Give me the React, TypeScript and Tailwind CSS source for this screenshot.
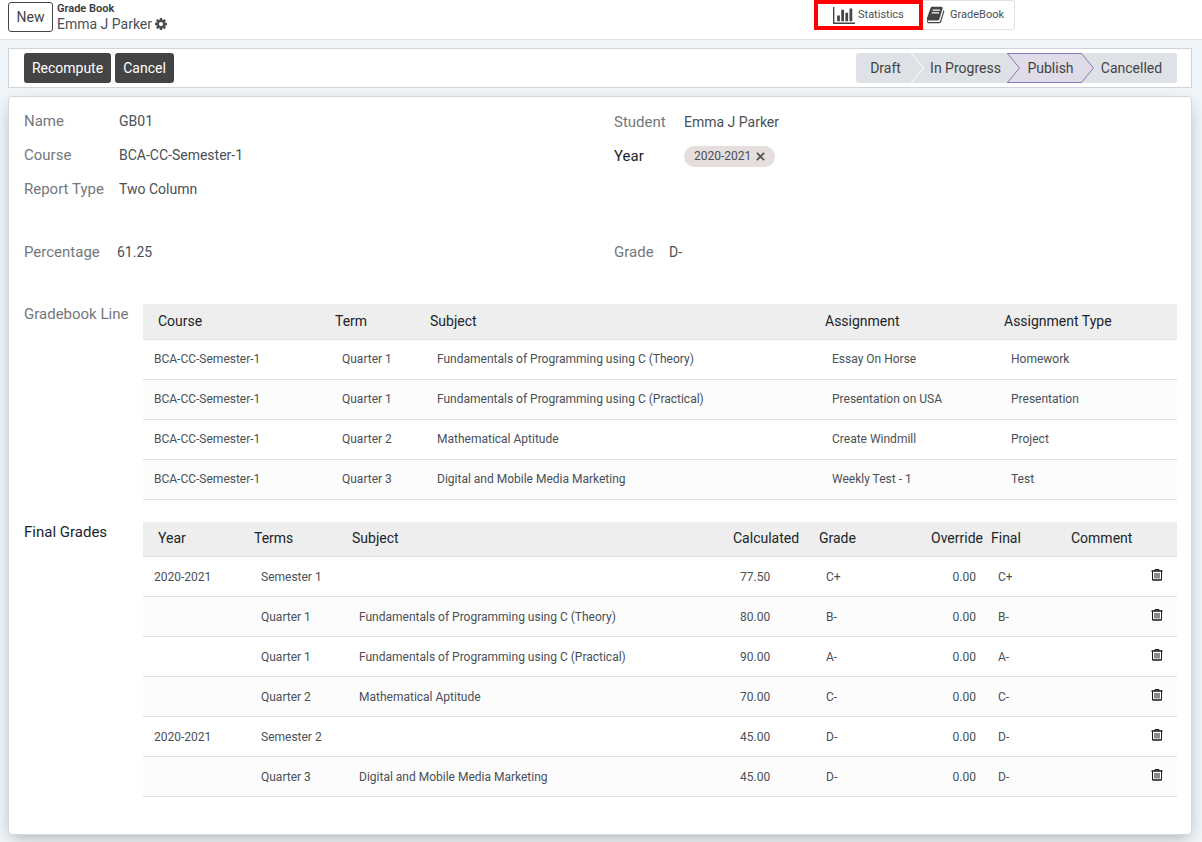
const cog = 'M1152 896q0-106-75-181t-181-75-181 75-75 181 75 181 181 75 181-75 75-181zm512-109v222q0 12-8 23t-20 13l-185 28q-19 54-39 91 35 50 107 138 10 12 10 25t-9 23q-27 37-99 108t-94 71q-12 0-26-9l-138-108q-44 23-91 38-16 136-29 186-7 28-36 28h-222q-14 0-24.500-8.500t-11.500-21.500l-28-184q-49-16-90-37l-141 107q-10 9-25 9-14 0-25-11-126-114-165-168-7-10-7-23 0-12 8-23 15-21 51-66.500t54-70.500q-27-50-41-99l-183-27q-13-2-21-12.500t-8-23.500v-222q0-12 8-23t19-13l186-28q14-46 39-92-40-57-107-138-10-12-10-24 0-10 9-23 26-36 98.500-107.500t94.500-71.500q13 0 26 10l138 107q44-23 91-38 16-136 29-186 7-28 36-28h222q14 0 24.500 8.500t11.500 21.500l28 184q49 16 90 37l142-107q9-9 24-9 13 0 25 10 129 119 165 170 7 8 7 22 0 12-8 23-15 21-51 66.500t-54 70.500q26 50 41 98l183 28q13 2 21 12.500t8 23.500z';
const book = 'M1639 478q40 57 18 129l-275 906q-19 64-76.500 107.500t-122.500 43.500h-923q-77 0-148.500-53.500t-99.500-131.500q-24-67-2-127 0-4 3-27t4-37q1-8-3-21.500t-3-19.500q2-11 8-21t16.500-23.500 16.500-23.500q23-38 45-91.500t30-91.500q3-10 .5-30t-.5-28q3-11 17-28t17-23q21-36 42-92t25-90q1-9-2.500-32t.5-28q4-13 22-30.500t22-22.500q19-26 42.500-84.500t27.500-96.500q1-8-3-25.500t-2-26.500q2-8 9-18t18-23 17-21q8-12 16.500-30.500t15-35 16-36 19.500-32 26.500-23.500 36-11.500 47.500 5.500l-1 3q38-9 51-9h761q74 0 114 56t18 130l-274 906q-36 119-71.500 153.500t-128.500 34.500h-869q-27 0-38 15-11 16-1 43 24 70 144 70h923q29 0 56-15.500t35-41.500l300-987q7-22 5-57 38 15 59 43zm-1064 2q-4 13 2 22.500t20 9.500h608q13 0 25.500-9.500t16.500-22.500l21-64q4-13-2-22.500t-20-9.500h-608q-13 0-25.500 9.500t-16.500 22.500zm-83 256q-4 13 2 22.500t20 9.500h608q13 0 25.500-9.500t16.500-22.500l21-64q4-13-2-22.500t-20-9.500h-608q-13 0-25.500 9.500t-16.500 22.500z';
const chart = 'M640 896v512h-256v-512h256zm384-512v1024h-256v-1024h256zm1024 1152v128h-2048v-1536h128v1408h1920zm-640-896v768h-256v-768h256zm384-384v1152h-256v-1152h256z';

const lines = [
  ['BCA-CC-Semester-1', 'Quarter 1', 'Fundamentals of Programming using C (Theory)', 'Essay On Horse', 'Homework'],
  ['BCA-CC-Semester-1', 'Quarter 1', 'Fundamentals of Programming using C (Practical)', 'Presentation on USA', 'Presentation'],
  ['BCA-CC-Semester-1', 'Quarter 2', 'Mathematical Aptitude', 'Create Windmill', 'Project'],
  ['BCA-CC-Semester-1', 'Quarter 3', 'Digital and Mobile Media Marketing', 'Weekly Test - 1', 'Test'],
];

const grades = [
  { year: '2020-2021', term: 'Semester 1', subject: '', calculated: '77.50', grade: 'C+' },
  { year: '', term: 'Quarter 1', subject: 'Fundamentals of Programming using C (Theory)', calculated: '80.00', grade: 'B-' },
  { year: '', term: 'Quarter 1', subject: 'Fundamentals of Programming using C (Practical)', calculated: '90.00', grade: 'A-' },
  { year: '', term: 'Quarter 2', subject: 'Mathematical Aptitude', calculated: '70.00', grade: 'C-' },
  { year: '2020-2021', term: 'Semester 2', subject: '', calculated: '45.00', grade: 'D-' },
  { year: '', term: 'Quarter 3', subject: 'Digital and Mobile Media Marketing', calculated: '45.00', grade: 'D-' },
];

const headRow = 'h-[35px] bg-[#eeeeee] border-b border-[#dee2e6] text-left text-[14px] text-[#212529]';
const bodyRow = 'h-10 border-b border-[#dee2e6] even:bg-[#fcfcfc]';
const th = 'pl-1 font-normal';
const td = 'pl-[11px]';

function Field({ label, value, width, dark }: { label: string; value: React.ReactNode; width: string; dark?: boolean }) {
  return (
    <div className="flex h-[34px] items-center">
      <span className={`${width} shrink-0 text-[15px] ${dark ? 'text-[#212529]' : 'text-[#74787c]'}`}>{label}</span>
      <span className="text-[14px] text-[#495057]">{value}</span>
    </div>
  );
}

function Chevron({ left, right, stroke, active }: { left: string; right: string; stroke: string; active?: boolean }) {
  return (
    <svg width="13" height="30" viewBox="0 0 13 30" className="shrink-0">
      <rect width="13" height="30" fill={right} />
      <path d="M0 0L12.500 15L0 30z" fill={left} />
      <path d="M0 0L12.500 15L0 30" fill="none" stroke={stroke} />
      {active && <path d="M0 0.500H13M0 29.500H13" stroke={stroke} />}
    </svg>
  );
}

export default function App() {
  return (
    <div className="flex min-h-screen flex-col bg-[#f0f5fa] font-['Roboto',sans-serif] text-[#495057]">
      <header className="flex h-10 items-start border-b border-[#dee2e6] bg-white pl-2">
        <button className="mt-[2px] h-[30px] w-[45px] rounded-[3px] border border-[#444444] text-[14px] text-[#444444]">New</button>
        <div className="ml-1 pt-[2px]">
          <div className="text-[11px] leading-[14px] font-semibold text-[#343a40]">Grade Book</div>
          <div className="flex items-center gap-[3px] text-[14px] leading-4">
            <span>Emma J Parker</span>
            <button aria-label="Actions">
              <svg width="12" height="12" viewBox="128 128 1536 1536" fill="#495057"><path d={cog} /></svg>
            </button>
          </div>
        </div>
        <div className="mr-[187px] ml-auto flex h-[30px] text-[11px]">
          <button className="relative flex w-[109px] items-center gap-[3px] pl-[19px]">
            <svg width="22" height="17" viewBox="0 128 2048 1536" preserveAspectRatio="none" fill="#444444"><path d={chart} /></svg>
            Statistics
            <span className="absolute inset-0 border-4 border-[#ff0000]" />
          </button>
          <button className="flex w-[92px] items-center gap-[5px] rounded-r-[3px] border border-l-0 border-[#dee2e6] pl-1">
            <svg width="18" height="18" viewBox="64 128 1664 1536" fill="#444444"><path d={book} /></svg>
            GradeBook
          </button>
        </div>
      </header>

      <div className="mt-2 mr-[10px] ml-2 flex h-10 items-center justify-between border border-[#ced4da] bg-white pr-[14px] pl-[15px]">
        <div className="flex gap-1 text-[14px] text-white">
          <button className="h-[30px] w-[87px] rounded-[3px] bg-[#444444]">Recompute</button>
          <button className="h-[30px] w-[59px] rounded-[3px] bg-[#444444]">Cancel</button>
        </div>
        <div className="flex h-[30px] overflow-hidden rounded-[3px] text-[14px] text-[#444444]">
          <button className="w-[55px] bg-[#dee2e6] pl-1">Draft</button>
          <Chevron left="#dee2e6" right="#dee2e6" stroke="#ffffff" />
          <button className="w-[83px] bg-[#dee2e6]">In Progress</button>
          <Chevron left="#dee2e6" right="#dfdbe9" stroke="#8579b5" active />
          <button className="w-[61px] border-y border-[#8579b5] bg-[#dfdbe9]" aria-current="step">Publish</button>
          <Chevron left="#dfdbe9" right="#dee2e6" stroke="#8579b5" />
          <button className="w-[83px] bg-[#dee2e6] pr-2">Cancelled</button>
        </div>
      </div>

      <main className="mt-2 mr-[10px] mb-[7px] ml-2 flex-1 rounded-[4px] border border-[#d5d8da] bg-white pt-[7px] pr-[14px] pb-[37px] pl-[15px] shadow-[0_6px_16px_-4px_rgba(0,0,0,0.3)]">
        <div className="grid grid-cols-2 gap-x-[27px]">
          <div>
            <Field label="Name" value="GB01" width="w-[95px]" />
            <Field label="Course" value="BCA-CC-Semester-1" width="w-[95px]" />
            <Field label="Report Type" value="Two Column" width="w-[95px]" />
          </div>
          <div className="pt-px">
            <Field label="Student" value="Emma J Parker" width="w-[70px]" />
            <Field
              label="Year"
              width="w-[70px]"
              dark
              value={
                <span className="flex h-[21px] items-center gap-[5px] rounded-full bg-[#e6dddd] px-[10px] text-[12px]">
                  2020-2021
                  <button aria-label="Remove 2020-2021">
                    <svg width="9" height="9" viewBox="0 0 10 10" stroke="#555555" strokeWidth="2"><path d="M1 1L9 9M9 1L1 9" /></svg>
                  </button>
                </span>
              }
            />
          </div>
        </div>
        <div className="mt-[29px] grid grid-cols-2 gap-x-[27px]">
          <Field label="Percentage" value="61.25" width="w-[93px]" />
          <Field label="Grade" value="D-" width="w-[55px]" />
        </div>

        <section className="mt-[35px] flex">
          <h2 className="w-[119px] shrink-0 text-[15px] leading-5 text-[#74787c]">Gradebook Line</h2>
          <table className="w-full table-fixed text-[12px]">
            <thead>
              <tr className={headRow}>
                <th className="w-[188px] pl-[15px] font-normal">Course</th>
                <th className={`w-[95px] ${th}`}>Term</th>
                <th className={th}>Subject</th>
                <th className={`w-[179px] ${th}`}>Assignment</th>
                <th className={`w-[177px] ${th}`}>Assignment Type</th>
              </tr>
            </thead>
            <tbody>
              {lines.map((line, i) => (
                <tr key={i} className={bodyRow}>
                  {line.map((cell, j) => (
                    <td key={j} className={td}>{cell}</td>
                  ))}
                </tr>
              ))}
            </tbody>
          </table>
        </section>

        <section className="mt-[22px] flex">
          <h2 className="w-[119px] shrink-0 text-[15px] leading-5 text-[#212529]">Final Grades</h2>
          <table className="w-full table-fixed text-[12px]">
            <thead>
              <tr className={headRow}>
                <th className="w-[107px] pl-[15px] font-normal">Year</th>
                <th className={`w-[98px] ${th}`}>Terms</th>
                <th className={th}>Subject</th>
                <th className={`w-[86px] ${th}`}>Calculated</th>
                <th className={`w-[86px] ${th}`}>Grade</th>
                <th className="w-[86px] pr-1 text-right font-normal">Override</th>
                <th className={`w-[80px] ${th}`}>Final</th>
                <th className={`w-[70px] ${th}`}>Comment</th>
                <th className="w-[40px]" />
              </tr>
            </thead>
            <tbody>
              {grades.map((g, i) => (
                <tr key={i} className={bodyRow}>
                  <td className={td}>{g.year}</td>
                  <td className={td}>{g.term}</td>
                  <td className={td}>{g.subject}</td>
                  <td className={td}>{g.calculated}</td>
                  <td className={td}>{g.grade}</td>
                  <td className="pr-[11px] text-right">0.00</td>
                  <td className={td}>{g.grade}</td>
                  <td />
                  <td className="pb-1 pl-[14px]">
                    <button className="block" aria-label="Delete row">
                      <svg width="12" height="12" viewBox="0 0 12 12" fill="none" stroke="#16191c">
                        <path d="M0.500 2H11.500" strokeWidth="1.500" />
                        <path d="M4 2V0.500H8V2M1.500 2V11M10.500 2V11" />
                        <path d="M1.500 11H10.500" strokeWidth="1.500" />
                        <path d="M4 4V9.500M6 4V9.500M8 4V9.500" />
                      </svg>
                    </button>
                  </td>
                </tr>
              ))}
            </tbody>
          </table>
        </section>
      </main>
    </div>
  );
}
